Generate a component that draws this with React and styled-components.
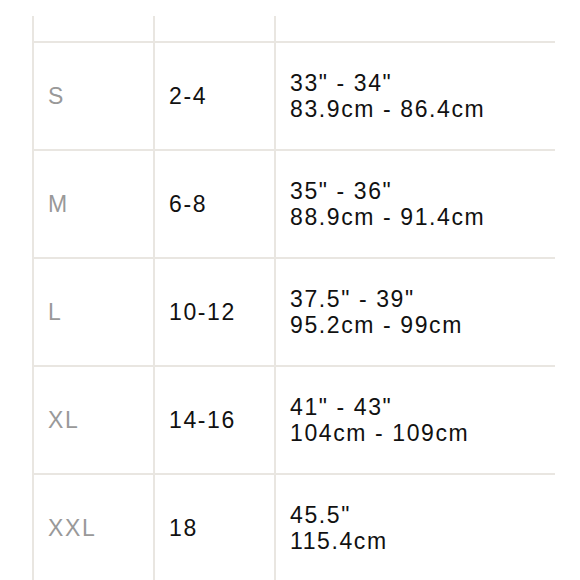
import React from "react";
import styled, { createGlobalStyle } from "styled-components";

const sizes = [
  { size: "S", uk: "2-4", inch: '33" - 34"', cm: "83.9cm - 86.4cm" },
  { size: "M", uk: "6-8", inch: '35" - 36"', cm: "88.9cm - 91.4cm" },
  { size: "L", uk: "10-12", inch: '37.5" - 39"', cm: "95.2cm - 99cm" },
  { size: "XL", uk: "14-16", inch: '41" - 43"', cm: "104cm - 109cm" },
  { size: "XXL", uk: "18", inch: '45.5"', cm: "115.4cm" },
];

const App = () => {
  return (
    <>
      <GlobalStyle />
      <Table>
        <Row $height={27}>
          <Cell />
          <Cell />
          <Cell />
        </Row>
        {sizes.map((s) => (
          <Row key={s.size} $height={108}>
            <Cell $muted>{s.size}</Cell>
            <Cell>{s.uk}</Cell>
            <Cell>
              <Measure>
                <span>{s.inch}</span>
                <span>{s.cm}</span>
              </Measure>
            </Cell>
          </Row>
        ))}
      </Table>
    </>
  );
};

export default App;

const GlobalStyle = createGlobalStyle`
  body {
    margin: 0;
    background: #ffffff;
    font-family: "Liberation Sans", Arial, sans-serif;
  }
`;

const Table = styled.div`
  width: 523px;
  margin: 16px 0 0 32px;
`;

const Row = styled.div`
  display: grid;
  grid-template-columns: 121px 121px 1fr;
  height: ${(p) => p.$height}px;
  box-sizing: border-box;
  border-bottom: 2px solid #e9e6e1;
`;

const Cell = styled.div`
  display: flex;
  align-items: center;
  padding-left: 14px;
  border-left: 2px solid #e9e6e1;
  font-size: 23px;
  letter-spacing: 1.6px;
  color: ${(p) => (p.$muted ? "#999999" : "#111111")};
`;

const Measure = styled.div`
  display: flex;
  flex-direction: column;
  line-height: 26px;
`;
